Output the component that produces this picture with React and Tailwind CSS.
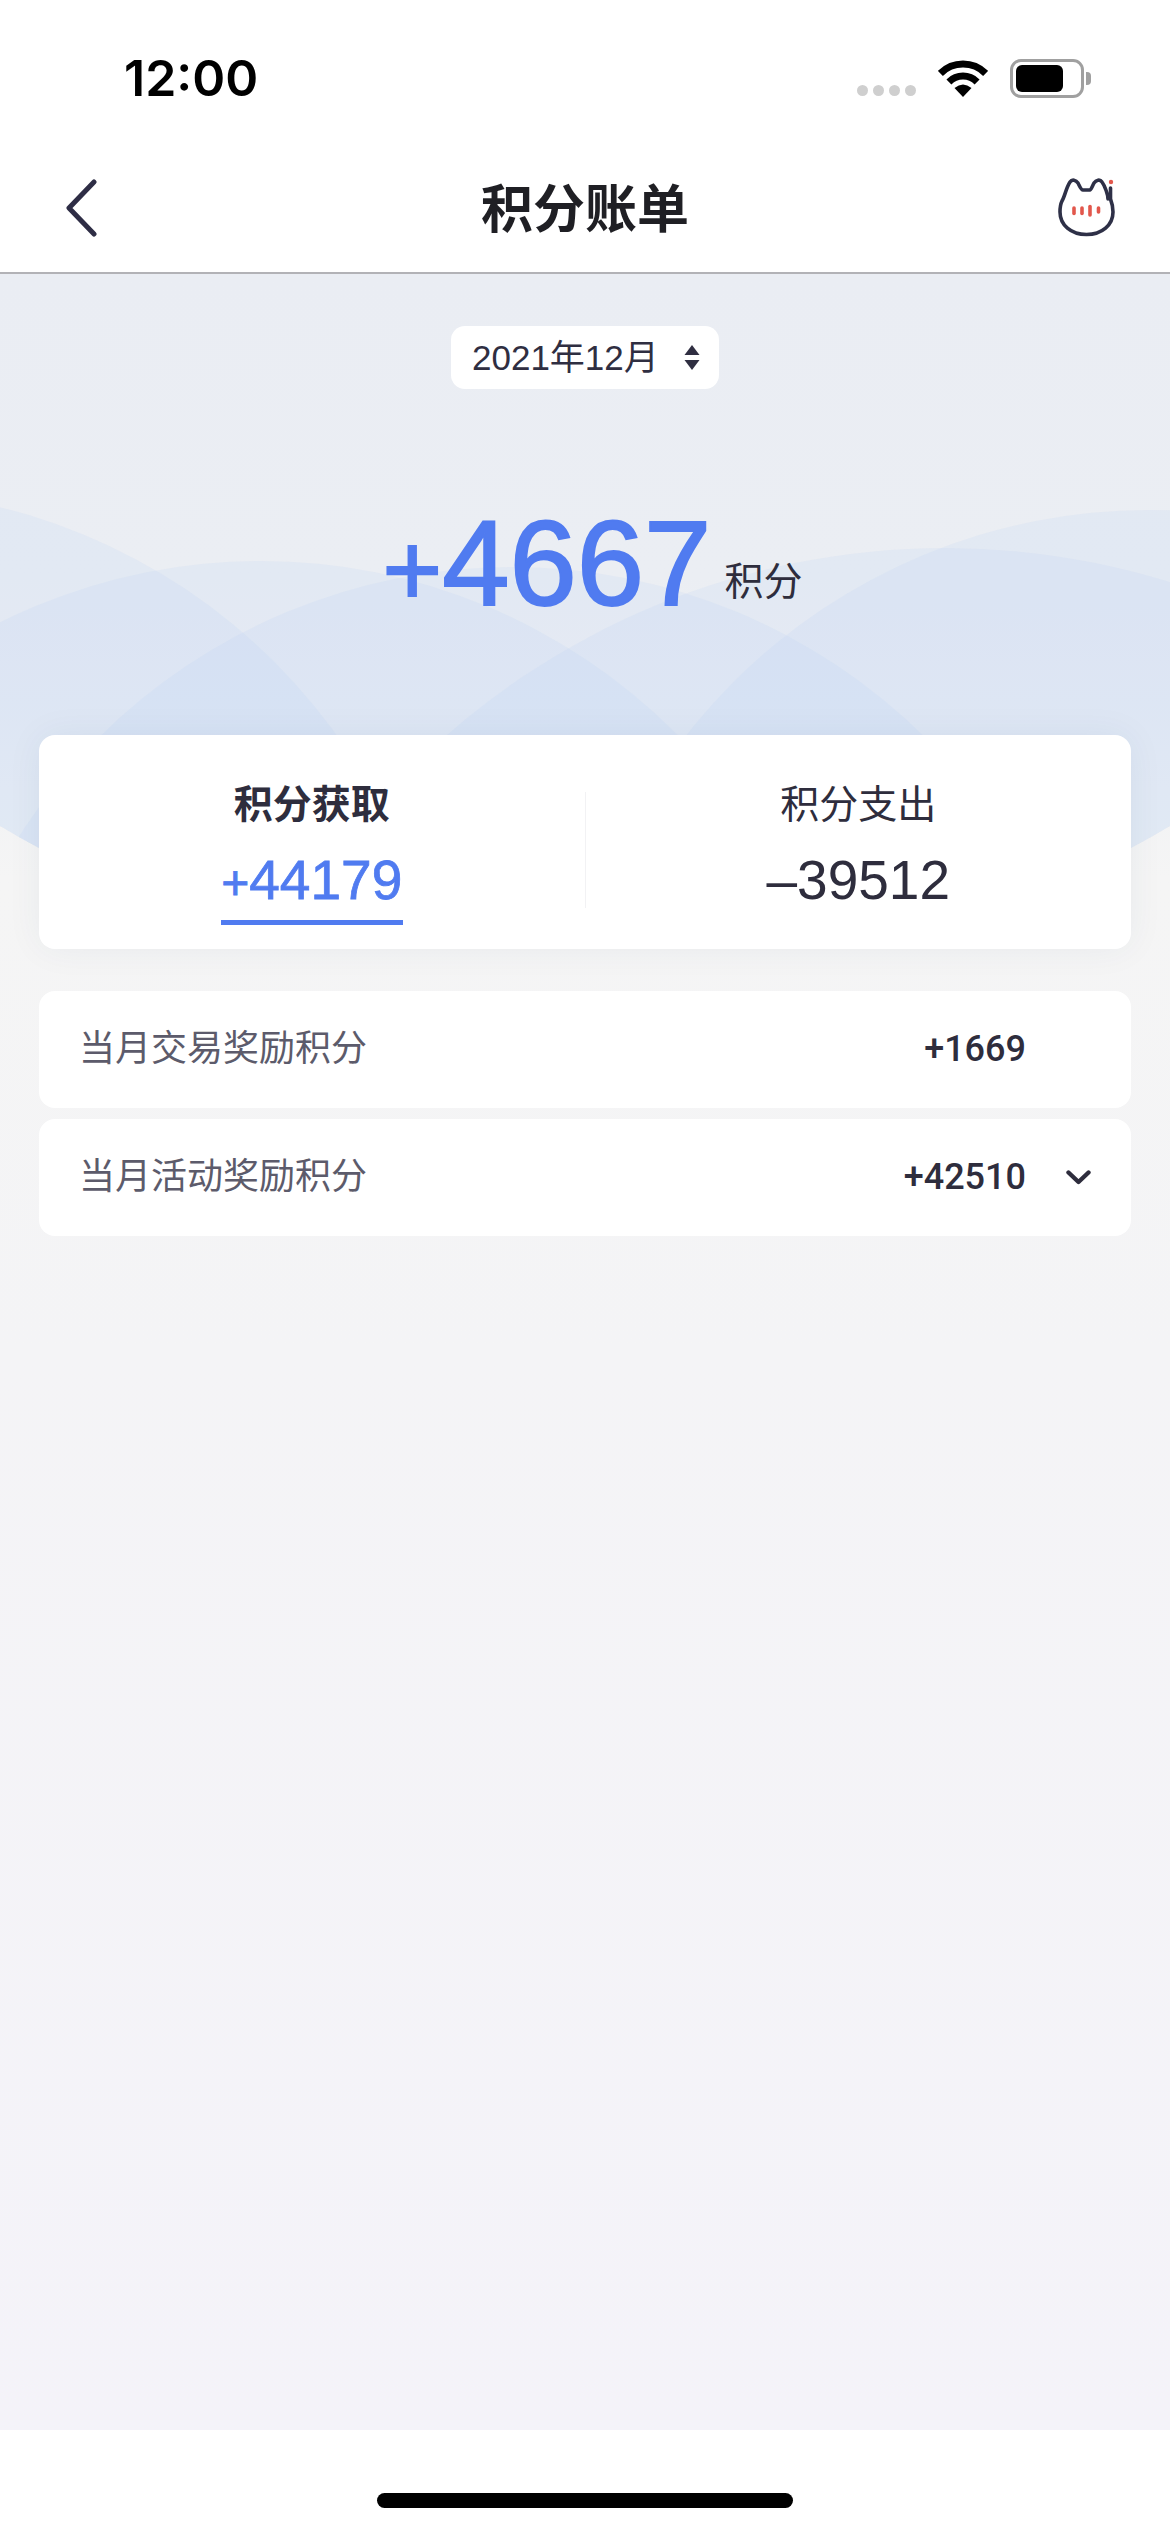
import React from "react";

function Wifi() {
  return (
    <svg width="50" height="37" viewBox="0 0 50 37" fill="none">
      <path d="M2.4 13.4 A32 32 0 0 1 47.6 13.4" stroke="#000" strokeWidth="7" />
      <path d="M10.9 21.9 A20 20 0 0 1 39.1 21.9" stroke="#000" strokeWidth="7" />
      <path d="M25 37 L16.5 28 Q25 21 33.5 28 Z" fill="#000" />
    </svg>
  );
}

function Battery() {
  return (
    <div className="flex items-center">
      <div className="w-[74px] h-[39px] rounded-[11px] border-[3px] border-[#a0a0a0] p-[3px] flex">
        <div className="w-[47px] h-full rounded-[6px] bg-black" />
      </div>
      <div className="w-[5px] h-[13px] ml-[2px] rounded-r-[4px] bg-[#a0a0a0]" />
    </div>
  );
}

function Cat() {
  return (
    <svg width="70" height="70" viewBox="20 15 70 70" fill="none">
      <path
        d="M75 40 C75 36 72 27 69 23 C67 20 63 21 61 24 C59 28 58 31 57 31 L50 31 C48 31 47 28 45 24 C43 21 39 20 37 23 C33 29 32 37 29 42 C27 46 27 50 27 53 C27 66 38 75.5 53.5 75.5 C69 75.5 80 66 80 53 C80 48 79 44 77.5 40 L77.5 29"
        stroke="#2e3047"
        strokeWidth="3.6"
        strokeLinecap="round"
        strokeLinejoin="round"
      />
      <g stroke="#e2574c" strokeWidth="3.6" strokeLinecap="round">
        <path d="M41 49 V54.5" />
        <path d="M49 49 V54.5" />
        <path d="M57 47.5 V56" />
        <path d="M65.5 49 V53" />
      </g>
      <circle cx="78" cy="23" r="2.2" fill="#e2574c" />
    </svg>
  );
}

function Arcs() {
  const fill = "rgba(186,208,243,0.17)";
  return (
    <svg className="absolute left-0 top-0" width="1170" height="700" viewBox="0 274 1170 700" fill="none">
      <defs>
        <clipPath id="arc-clip">
          <path d="M0 274 H1170 V826 Q1150 838 1131 848 V900 H39 V848 Q20 838 0 826 Z" />
        </clipPath>
      </defs>
      <g clipPath="url(#arc-clip)">
        <circle cx="-141" cy="1078" r="588" fill={fill} />
        <circle cx="261" cy="1147" r="586" fill={fill} />
        <circle cx="512" cy="1153" r="586" fill={fill} />
        <circle cx="945" cy="1305" r="757" fill={fill} />
        <circle cx="1149" cy="1098" r="588" fill={fill} />
      </g>
    </svg>
  );
}

function Row({ label, value, chevron }) {
  return (
    <div className="h-[117px] rounded-[16px] bg-white flex items-center pl-[40px]">
      <span className="flex-1 pb-[10px] text-[36px] leading-[50px] text-[#5c5b6b] font-['Noto_Sans_CJK_SC',sans-serif] font-normal">{label}</span>
      <span className="pb-[2px] text-[36px] leading-[50px] font-medium text-[#2e2d3d] font-['Roboto',sans-serif]">{value}</span>
      <span className="w-[105px] flex items-center justify-start pl-[40px]">
        {chevron && (
          <svg width="25" height="15" viewBox="0 0 25 15" fill="none">
            <path d="M2.5 2.5 L12.5 12 L22.5 2.5" stroke="#2e2d3d" strokeWidth="4.4" strokeLinecap="round" strokeLinejoin="round" />
          </svg>
        )}
      </span>
    </div>
  );
}

export default function App() {
  return (
    <div className="w-[1170px] h-[2532px] flex flex-col bg-white overflow-hidden">
      <header className="h-[274px] shrink-0 bg-white border-b-2 border-[#b2b2b6] flex flex-col">
        <div className="h-[156px] flex items-center pl-[124px] pr-[79px]">
          <span className="flex-1 text-[50px] leading-none font-semibold text-black font-['Inter',sans-serif]">12:00</span>
          <div className="flex items-end gap-[5px] mt-[24px] mr-[22px]">
            <span className="w-[11px] h-[11px] rounded-full bg-[#cfcfcf]" />
            <span className="w-[11px] h-[11px] rounded-full bg-[#cfcfcf]" />
            <span className="w-[11px] h-[11px] rounded-full bg-[#cfcfcf]" />
            <span className="w-[11px] h-[11px] rounded-full bg-[#cfcfcf]" />
          </div>
          <div className="mr-[22px]"><Wifi /></div>
          <Battery />
        </div>
        <div className="h-[104px] flex items-center px-[47px] pb-[4px]">
          <div className="w-[100px] flex pl-[17px] pt-[4px]">
            <svg width="34" height="58" viewBox="0 0 34 58" fill="none">
              <path d="M30 3 L5 29 L30 55" stroke="#2e2d45" strokeWidth="5" strokeLinecap="round" strokeLinejoin="round" />
            </svg>
          </div>
          <h1 className="flex-1 text-center text-[52px] leading-[70px] font-semibold text-[#1f1f24] font-['Noto_Sans_CJK_SC',sans-serif]">积分账单</h1>
          <div className="w-[100px] flex justify-end pt-[6px]">
            <Cat />
          </div>
        </div>
      </header>

      <main className="relative flex-1 overflow-hidden bg-[linear-gradient(180deg,#eaedf3_0%,#ebeef3_14%,#f5f5f5_28%,#f4f4f6_50%,#f4f3f9_100%)]">
        <Arcs />
        <div className="relative flex flex-col">
          <div className="mt-[52px] self-center h-[63px] w-[268px] rounded-[14px] bg-white flex items-center pl-[21px] text-[35px] leading-none text-[#2f2e41] font-['Liberation_Sans','Noto_Sans_CJK_SC',sans-serif]">
            <span className="flex-1">2021年12月</span>
            <svg className="mr-[19px]" width="16" height="25" viewBox="0 0 16 25" fill="#2f2e41">
              <path d="M8 0 L15.5 10 H0.5 Z" />
              <path d="M8 25 L15.5 15 H0.5 Z" />
            </svg>
          </div>

          <div className="mt-[106px] h-[150px] flex items-end justify-center pl-[15px]">
            <span className="text-[121px] leading-[150px] text-[#507bf0] [-webkit-text-stroke:2px_#507bf0] font-['Liberation_Sans',sans-serif]">
              <span className="text-[102px]">+</span>4667
            </span>
            <span className="ml-[13px] mb-[47px] text-[39px] leading-none text-[#2e2d3d] font-['Noto_Sans_CJK_SC',sans-serif] font-normal">积分</span>
          </div>

          <section className="mt-[90px] mx-[39px] h-[214px] rounded-[16px] bg-white shadow-[0_0_36px_rgba(40,60,100,0.06)] flex items-center">
            <div className="flex-1 flex flex-col items-center pt-[39px] h-full">
              <span className="text-[39px] leading-[54px] font-semibold text-[#2e2d3d] font-['Noto_Sans_CJK_SC',sans-serif]">积分获取</span>
              <span className="mt-[16px] h-[81px] w-[182px] border-b-[5px] border-[#507bf0] text-center text-[55px] leading-[72px] text-[#507bf0] [-webkit-text-stroke:0.8px_#507bf0] font-['Liberation_Sans',sans-serif]">
                <span className="text-[48px]">+</span>44179
              </span>
            </div>
            <div className="w-px h-[116px] mt-[16px] bg-[#f2f2f4]" />
            <div className="flex-1 flex flex-col items-center pt-[39px] h-full">
              <span className="text-[39px] leading-[54px] text-[#2e2d3d] font-['Noto_Sans_CJK_SC',sans-serif] font-normal">积分支出</span>
              <span className="mt-[16px] text-[55px] leading-[72px] text-[#2e2d3d] font-['Liberation_Sans',sans-serif]">–39512</span>
            </div>
          </section>

          <div className="mt-[42px] mx-[39px] flex flex-col gap-[11px]">
            <Row label="当月交易奖励积分" value="+1669" />
            <Row label="当月活动奖励积分" value="+42510" chevron />
          </div>
        </div>
      </main>

      <footer className="h-[102px] shrink-0 bg-white flex justify-center pt-[63px]">
        <div className="w-[416px] h-[15px] rounded-[8px] bg-black" />
      </footer>
    </div>
  );
}
